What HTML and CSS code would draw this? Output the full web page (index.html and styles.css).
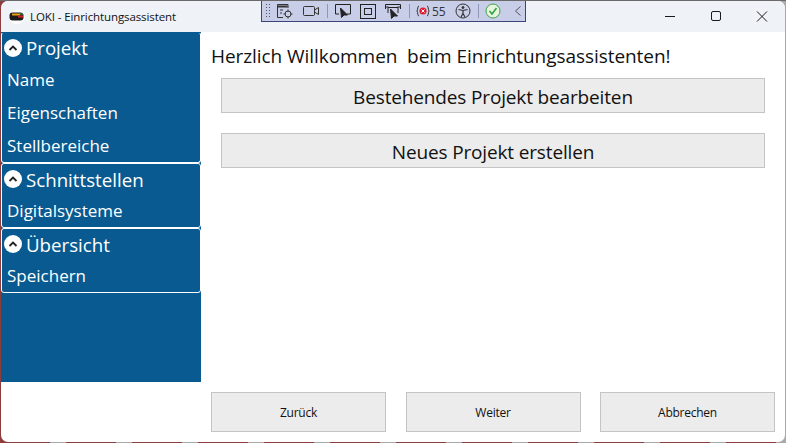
FILE: index.html
```html
<!DOCTYPE html>
<html lang="de">
<head>
    <meta charset="UTF-8">
    <meta name="viewport" content="width=device-width, initial-scale=1.0">
    <title>LOKI - Einrichtungsassistent</title>
    <link rel="stylesheet" href="styles.css">
</head>
<body>
    <div class="window">
        <header class="titlebar">
            <svg class="app-icon" width="16" height="16" viewBox="0 0 16 16">
                <ellipse cx="8" cy="8" rx="8" ry="7" fill="#fff"/>
                <rect x="0.500" y="3.500" width="14" height="8" rx="3" fill="#1c1c1c"/>
                <rect x="3" y="4.500" width="8" height="2" fill="#e8a317"/>
                <rect x="9" y="6.500" width="5" height="2" fill="#d42020"/>
                <rect x="11" y="4.500" width="3" height="1" fill="#3fa34d"/>
            </svg>
            <span class="app-title">LOKI - Einrichtungsassistent</span>
            <div class="win-buttons">
                <svg width="46" height="31" viewBox="0 0 46 31"><path d="M18 15.500h10" stroke="#1a1a1a" fill="none"/></svg>
                <svg width="46" height="31" viewBox="0 0 46 31"><rect x="18.500" y="10.500" width="9" height="9" rx="1.500" stroke="#1a1a1a" fill="none"/></svg>
                <svg width="46" height="31" viewBox="0 0 46 31"><path d="M18 10.500l10 10M28 10.500l-10 10" stroke="#1a1a1a" fill="none"/></svg>
            </div>
        </header>

        <div class="content">
            <nav class="sidebar">
                <section class="nav-group nav-group-large">
                    <div class="nav-head"><span class="chevron"><svg width="10" height="6" viewBox="0 0 10 6"><path d="M1.500 5L5 1.500 8.500 5" stroke="#222" stroke-width="1.800" fill="none"/></svg></span>Projekt</div>
                    <div class="nav-item">Name</div>
                    <div class="nav-item">Eigenschaften</div>
                    <div class="nav-item">Stellbereiche</div>
                </section>
                <section class="nav-group">
                    <div class="nav-head"><span class="chevron"><svg width="10" height="6" viewBox="0 0 10 6"><path d="M1.500 5L5 1.500 8.500 5" stroke="#222" stroke-width="1.800" fill="none"/></svg></span>Schnittstellen</div>
                    <div class="nav-item">Digitalsysteme</div>
                </section>
                <section class="nav-group">
                    <div class="nav-head"><span class="chevron"><svg width="10" height="6" viewBox="0 0 10 6"><path d="M1.500 5L5 1.500 8.500 5" stroke="#222" stroke-width="1.800" fill="none"/></svg></span>Übersicht</div>
                    <div class="nav-item">Speichern</div>
                </section>
            </nav>

            <main class="main">
                <h1 class="welcome">Herzlich Willkommen&nbsp; beim Einrichtungsassistenten!</h1>
                <button class="big-button">Bestehendes Projekt bearbeiten</button>
                <button class="big-button">Neues Projekt erstellen</button>
            </main>

            <footer class="footer">
                <button class="small-button">Zurück</button>
                <button class="small-button">Weiter</button>
                <button class="small-button">Abbrechen</button>
            </footer>
        </div>

        <!-- debug toolbar lies over the title bar -->
        <div class="debug-bar">
            <span class="grip"></span>
            <svg width="20" height="18" viewBox="0 0 20 18" fill="none" stroke="#333"><path d="M13 6V2.500H2.500v13H8"/><path d="M2.500 4.500h10" stroke-width="2"/><path d="M5 8h3M5 11h2"/><circle cx="13" cy="12" r="3"/><path d="M13 7.500v2M13 14.500v2M8.500 12h2M15.500 12h2"/></svg>
            <svg class="gap-left" width="18" height="18" viewBox="0 0 18 18" fill="none" stroke="#333"><rect x="1.500" y="4.500" width="11" height="9" rx="1"/><path d="M12.500 8l4-2.500v7l-4-2.500"/></svg>
            <span class="sep"></span>
            <svg width="18" height="18" viewBox="0 0 18 18" fill="none" stroke="#222"><path d="M5 12H1.500V2.500h15V12H13"/><path d="M6.500 6l1 9.500 2.500-2.500 3.500 0z" fill="#222"/></svg>
            <svg class="gap-left" width="18" height="18" viewBox="0 0 18 18" fill="none" stroke="#222"><rect x="1.500" y="2.500" width="15" height="14"/><rect x="5.500" y="6.500" width="7" height="6"/></svg>
            <svg class="gap-left" width="18" height="18" viewBox="0 0 18 18" fill="none" stroke="#222"><path d="M1.500 7V2.500h15V7M1.500 5h3M16.500 5h-3"/><path d="M4 11V5.500h10V11"/><path d="M6.500 7l1 9.500 2.500-2.500 3.500 0z" fill="#222"/></svg>
            <span class="sep"></span>
            <span class="count">
                <svg width="14" height="14" viewBox="0 0 14 14"><path d="M3 2C1.500 2 2 5 1 7c1 2 .5 5 2 5M11 2c1.500 0 1 3 2 5-1 2-.5 5-2 5" stroke="#333" fill="none"/><circle cx="7" cy="7" r="3.600" fill="#e02032"/><path d="M5.500 5.500l3 3M8.500 5.500l-3 3" stroke="#fff"/></svg>
                55
            </span>
            <svg class="access-icon" width="16" height="16" viewBox="0 0 16 16" fill="none" stroke="#333"><circle cx="8" cy="8" r="7"/><circle cx="8" cy="4.500" r="1" fill="#333"/><path d="M3.500 6.500L8 7.500l4.500-1M8 7.500v3M8 10.500L6 14M8 10.500l2 3.500" stroke-width="1.200"/></svg>
            <span class="sep"></span>
            <svg width="16" height="16" viewBox="0 0 16 16" fill="none"><circle cx="8" cy="8" r="7" fill="#e6f4dd" stroke="#3fa34d"/><path d="M4.500 8l2.500 3 4.500-6" stroke="#2e9e3e" stroke-width="1.500"/></svg>
            <svg class="chev-left" width="8" height="12" viewBox="0 0 8 12" fill="none" stroke="#555"><path d="M6.500 1.500L1.500 6l5 4.500"/></svg>
        </div>
    </div>
</body>
</html>
```

FILE: styles.css
```css
* {
    box-sizing: border-box;
}
html, body {
    height: 100%;
}
body {
    margin: 0;
    padding: 1px;
    overflow: hidden;
    font-family: "Open Sans", "Noto Sans", sans-serif;
    color: #111;
    background:
        linear-gradient(#6a6a6a, #6a6a6a) top / 100% 1px no-repeat,
        linear-gradient(#a8a8a8, #a8a8a8) right / 1px 100% no-repeat,
        repeating-linear-gradient(90deg, #8c3d3d 0 50px, #a8a8a8 50px 66px);
}
.window {
    position: relative;
    height: 100%;
    display: flex;
    flex-direction: column;
    background-color: white;
    border-radius: 7px;
    overflow: hidden;
}
.titlebar {
    height: 31px;
    flex: none;
    display: flex;
    align-items: center;
    padding-left: 8px;
    background-color: #eff2f6;
}
.app-title {
    margin-left: 5px;
    font-size: 11.500px;
    letter-spacing: -0.1px;
}
.win-buttons {
    margin-left: auto;
    display: flex;
}
.win-buttons svg {
    display: block;
}
.content {
    flex: 1;
    display: grid;
    grid-template-columns: 200px 1fr;
    grid-template-rows: 350px 1fr;
}
.sidebar {
    grid-row: 1;
    background-color: #085a91;
    color: white;
}
.nav-group {
    height: 65px;
    display: flex;
    flex-direction: column;
    border: 1px solid white;
    border-radius: 3px;
}
.nav-group-large {
    height: 131px;
    border-top-color: #085a91;
}
.nav-head {
    height: 32px;
    flex: none;
    display: flex;
    align-items: center;
    padding: 0 0 2px 2px;
    font-size: 18.700px;
}
.nav-group-large .nav-head {
    margin-top: -1px;
    height: 33px;
}
.chevron {
    width: 18px;
    height: 18px;
    margin-right: 4px;
    border-radius: 50%;
    background-color: white;
    display: flex;
    align-items: center;
    justify-content: center;
    flex: none;
}
.nav-item {
    height: 33px;
    line-height: 29px;
    padding-left: 5px;
    font-size: 17px;
}
.nav-item:last-child {
    height: auto;
    flex: 1;
}
.main {
    grid-row: 1;
    display: flex;
    flex-direction: column;
    padding: 9px 20px 0 20px;
}
.welcome {
    margin: 0 0 7px -10px;
    height: 30px;
    line-height: 30px;
    font-size: 19px;
    font-weight: normal;
    letter-spacing: -0.06px;
    white-space: nowrap;
}
.big-button {
    height: 35px;
    margin-bottom: 20px;
    padding-top: 3px;
    border: 1px solid #c4c4c4;
    background-color: #ececec;
    font-family: inherit;
    font-size: 19px;
    letter-spacing: -0.15px;
    color: #111;
}
.footer {
    grid-column: 2;
    grid-row: 2;
    display: flex;
    justify-content: space-between;
    padding: 10px 10px 0 10px;
}
.small-button {
    width: 175px;
    height: 40px;
    padding-top: 2px;
    border: 1px solid #c4c4c4;
    background-color: #ececec;
    font-family: inherit;
    font-size: 12px;
    letter-spacing: -0.25px;
    color: #111;
}
.debug-bar {
    position: absolute;
    top: -1px;
    left: 260px;
    width: 265px;
    height: 22px;
    display: flex;
    align-items: center;
    padding-left: 3px;
    background-color: #c8cde8;
    border: 1px solid #3a4478;
}
.debug-bar svg {
    flex: none;
}
.grip {
    width: 6px;
    height: 16px;
    margin-right: 4px;
    background-image: radial-gradient(#555 0.7px, transparent 0.9px);
    background-size: 3px 3px;
}
.gap-left {
    margin-left: 7px;
}
.sep {
    width: 1px;
    height: 14px;
    margin: 0 6px 0 7px;
    background-color: #8f96b8;
}
.count {
    display: flex;
    align-items: center;
    gap: 2px;
    font-size: 12px;
    color: #333;
}
.access-icon {
    margin-left: 9px;
}
.chev-left {
    margin-left: 13px;
}
```
